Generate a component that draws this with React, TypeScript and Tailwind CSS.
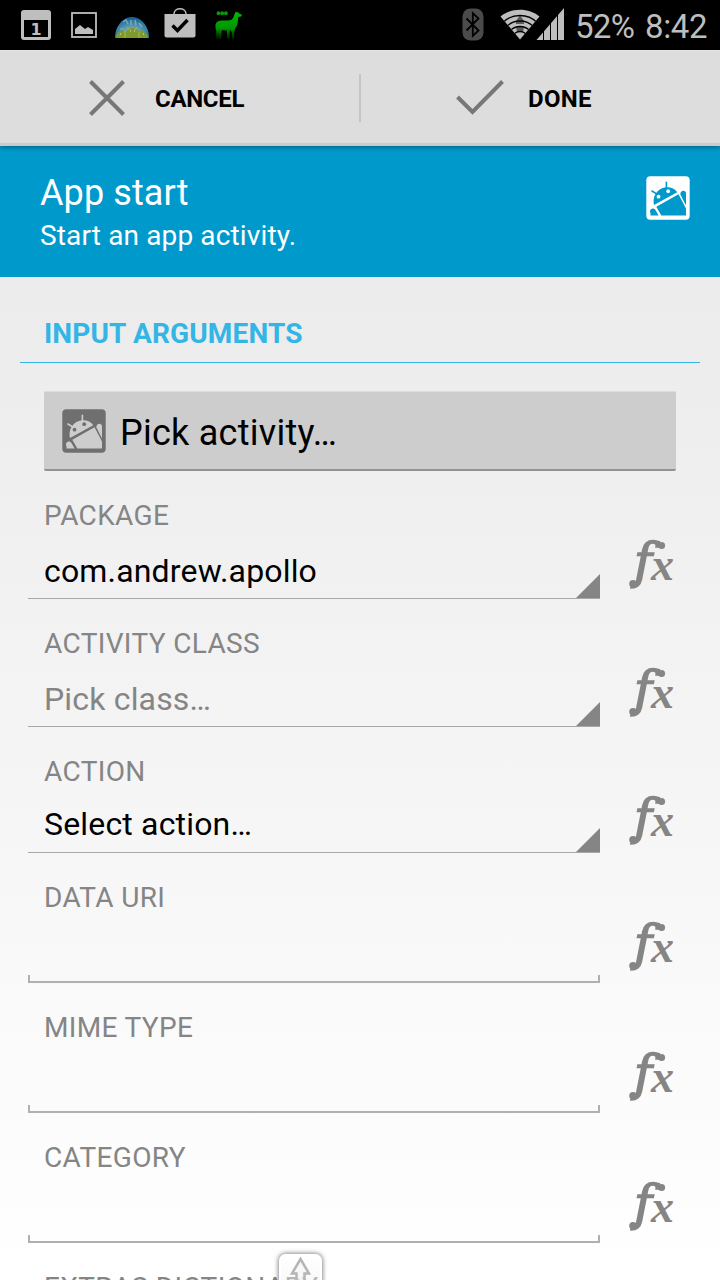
import React from 'react';

interface Field {
  label: string;
  value?: string;
  valueClass?: string;
  type: 'spinner' | 'text';
  height: string;
}

const fields: Field[] = [
  { label: 'PACKAGE', value: 'com.andrew.apollo', valueClass: 'pt-[11px] text-black', type: 'spinner', height: 'h-[128px]' },
  { label: 'ACTIVITY CLASS', value: 'Pick class…', valueClass: 'pt-[11px] text-[#858585]', type: 'spinner', height: 'h-[128px]' },
  { label: 'ACTION', value: 'Select action…', valueClass: 'pt-[7px] text-black', type: 'spinner', height: 'h-[126px]' },
  { label: 'DATA URI', type: 'text', height: 'h-[130px]' },
  { label: 'MIME TYPE', type: 'text', height: 'h-[130px]' },
  { label: 'CATEGORY', type: 'text', height: 'h-[130px]' },
];

const AndroidIcon = ({ box, ink }: { box: string; ink: string }) => (
  <svg width="44" height="44" viewBox="0 0 44 44" className="shrink-0">
    <rect x="0.3" y="0.3" width="43.4" height="43.4" rx="4" fill={box} />
    <g stroke={ink} strokeWidth="1.6" strokeLinecap="round">
      <path d="M20.4 6.4V12" />
      <path d="M6 15l5 3.2" />
    </g>
    <path d="M8 29C6.300 22.500 9.500 15.500 15.500 12.600 21.500 10 28 11.500 31.200 16.300Z" fill={ink} />
    <circle cx="12.500" cy="20.700" r="1.900" fill={box} />
    <circle cx="22.200" cy="15.200" r="1.900" fill={box} />
    <path d="M10.300 30.800L32.500 18.200 40 32.500V39.500H15.300Z" fill={ink} />
    <path d="M34.400 18.500C34.200 16 36 14.600 38 14.900 39.400 15.200 40 16 40 17V29.500Z" fill={ink} />
    <path d="M4.500 39.500V37.200C3 34.500 5 32.200 7.300 32.400 8.300 32.500 8.900 33 9.300 33.800L12.600 39.500Z" fill={ink} />
  </svg>
);

const StatusBar = () => (
  <div className="flex h-[50px] shrink-0 items-center bg-black pl-[21px] pr-3 text-[#bebebe]">
    <svg width="30" height="50" viewBox="0 0 30 50">
      <rect x="0" y="10" width="30" height="30" rx="3" fill="#bebebe" />
      <rect x="3" y="20" width="24" height="17" fill="#000" />
      <text x="15" y="35" textAnchor="middle" fontSize="16" fontWeight="700" fill="#bebebe" fontFamily="DejaVu Sans, sans-serif">1</text>
    </svg>
    <svg width="26" height="50" viewBox="0 0 26 50" className="ml-5">
      <rect x="1" y="13" width="24" height="24" fill="none" stroke="#bebebe" strokeWidth="1.800" />
      <path d="M4 34V29l5-4 5 4 3-2 5 3v4z" fill="#bebebe" />
    </svg>
    <svg width="34" height="50" viewBox="0 0 34 50" className="ml-[18px]">
      <defs>
        <radialGradient id="globe" cx="0.5" cy="0.7" r="0.65">
          <stop offset="0" stopColor="#9db9bb" />
          <stop offset="0.6" stopColor="#4388a9" />
          <stop offset="1" stopColor="#16618f" />
        </radialGradient>
      </defs>
      <path d="M0 38C0 27 7 17 17 17s17 10 17 21z" fill="url(#globe)" />
      <path d="M8 22l3-2 2 4M16 20v5M20 20l1 5M24 23l3 4M5 29h4" stroke="#79a8bd" strokeWidth="1.500" fill="none" />
      <path d="M1 38c0-4 2-6 4-6l2-2 4 2c2-3 4-4 7-4s5 2 6 4l4-2 2 3c2 1 3 3 3 5z" fill="#7c9a2e" />
      <path d="M10 38v-8M24 38v-6M12 27l2 3M22 27l-2 3" stroke="#a0b63f" strokeWidth="1.200" />
      <path d="M15 31h1M19 31h1M5 34h1M28 34h1" stroke="#e4e9c0" strokeWidth="1.200" />
    </svg>
    <svg width="32" height="50" viewBox="0 0 32 50" className="ml-[15px]">
      <path d="M10 15v-1c0-7 12-7 12 0v1" stroke="#bebebe" strokeWidth="1.500" fill="none" />
      <path d="M0.500 14H31.500V35.500a2 2 0 0 1-2 2H2.500a2 2 0 0 1-2-2z" fill="#bebebe" />
      <path d="M8.500 25.500l5 5L23.500 20" stroke="#000" strokeWidth="3.400" fill="none" />
    </svg>
    <svg width="28" height="50" viewBox="0 0 28 50" className="ml-[19px]">
      <defs>
        <linearGradient id="llama" gradientUnits="userSpaceOnUse" x1="0" y1="12" x2="0" y2="39">
          <stop offset="0" stopColor="#00b800" />
          <stop offset="0.6" stopColor="#009600" />
          <stop offset="1" stopColor="#001800" />
        </linearGradient>
      </defs>
      <path
        d="M0.500 25C1 21.500 4 20.500 8 20.500h4c4 0 5.500-1 6.500-3.500L20 13l1-1.500 1 1 1-.8.7 1.500 3.300 1.500-.7 1.800-3 .5-.5 4C22.500 24 22 27 19.800 29l-.6 4 .3 6h-2.500l-.3-7-1.700-2-.5 9h-2.500l-.2-8.500c-1.800.3-3.300 0-4.800-.5L6.500 33l-.2 6H4L3.700 33 3 39H1.500L1.200 31C.5 29 .3 27 .5 25z"
        fill="url(#llama)"
      />
      <g fill="#00a000">
        <circle cx="3.500" cy="13.200" r="1.900" />
        <circle cx="7.200" cy="13.200" r="1.900" />
        <circle cx="10.900" cy="13.200" r="1.900" />
      </g>
    </svg>
    <div className="grow" />
    <svg width="22" height="50" viewBox="0 0 22 50">
      <rect x="0.500" y="8.500" width="21" height="32" rx="8" fill="#4b4b4b" />
      <path d="M4.500 18.500L16.500 30.500 10.800 36V13L16.500 18.500 4.500 30.500" stroke="#000" strokeWidth="1.800" fill="none" />
    </svg>
    <svg width="66" height="50" viewBox="0 0 66 50" className="ml-[16px]">
      <defs>
        <clipPath id="fan">
          <path d="M0.500 16.500C11 7.500 29 7.500 39.500 16.500L20 39.500Z" />
        </clipPath>
      </defs>
      <g clipPath="url(#fan)">
        <rect width="40" height="40" fill="#bebebe" />
        <path d="M20 15l4 6v3h-8v-3zM16 27h8l-1 5h-6z" fill="#5b5b5b" />
        <g fill="none" stroke="#000" strokeWidth="1.300">
          <circle cx="20" cy="40" r="24.500" />
          <circle cx="20" cy="40" r="19" />
          <circle cx="20" cy="40" r="13.500" />
          <circle cx="20" cy="40" r="8.500" />
        </g>
      </g>
      <path d="M36.500 40L64 8V40Z" fill="#bebebe" />
      <path d="M43.500 26v14M50.500 20v20M57.500 12v28" stroke="#000" strokeWidth="1" />
    </svg>
    <span className="ml-[9px] w-[61px] whitespace-nowrap pt-[3px] text-[33px] tracking-[-0.7px]">52%</span>
    <span className="ml-[9px] w-[63px] whitespace-nowrap pt-[3px] text-[33px] tracking-[-0.4px]">8:42</span>
  </div>
);

const ActionBar = () => (
  <div className="relative z-10 flex h-24 shrink-0 items-center border-b-[3px] border-t border-b-[#cbcbcb] border-t-[#e6e6e6] bg-[#ddd] pt-[2px] text-2xl font-bold text-black shadow-[0_1px_5px_rgba(0,0,0,0.4)]">
    <div className="flex h-12 w-[361px] items-center border-r-2 border-[#c5c5c5] pl-[87px]">
      <svg width="40" height="40" viewBox="0 0 40 40" className="mr-7">
        <path d="M3.500 3.500l33 33M36.500 3.500l-33 33" stroke="#777" strokeWidth="4" />
      </svg>
      <span className="pt-px tracking-[-0.3px]">CANCEL</span>
    </div>
    <div className="flex items-center pl-[94px]">
      <svg width="50" height="40" viewBox="0 0 50 40" className="mr-[23px]">
        <path d="M2.500 19L17.500 34 47.500 3.500" stroke="#777" strokeWidth="4" fill="none" />
      </svg>
      <span className="pt-px tracking-[0.3px]">DONE</span>
    </div>
  </div>
);

const FxButton = () => (
  <svg width="48" height="60" viewBox="0 0 48 60" className="mt-[64px] shrink-0 overflow-visible" fill="#858585">
    <text y="43" fontStyle="italic">
      <tspan x="6" fontFamily="DejaVu Serif, serif" fontSize="49" stroke="#858585" strokeWidth="1.6">f</tspan>
      <tspan x="23" dy="2" fontFamily="Liberation Serif, serif" fontWeight="700" fontSize="46">x</tspan>
    </text>
    <circle cx="33.600" cy="10.500" r="3.500" />
    <circle cx="5" cy="48.800" r="3.800" />
  </svg>
);

const FieldRow = ({ field }: { field: Field }) => (
  <div className={`flex shrink-0 pl-7 pr-[44px] ${field.height}`}>
    <div className="flex w-[572px] flex-col">
      <div className="mt-[29px] h-8 pl-4 text-[28px] leading-8 tracking-[0.35px] text-[#858585]">{field.label}</div>
      {field.type === 'spinner' ? (
        <div className="relative flex grow items-center border-b border-[#a8a8a8] pl-4 text-[32px] tracking-[0.17px]">
          <span className={field.valueClass}>{field.value}</span>
          <svg width="24" height="24" viewBox="0 0 24 24" className="absolute bottom-0 right-0">
            <path d="M24 0V24H0Z" fill="#858585" />
          </svg>
        </div>
      ) : (
        <div className="flex grow flex-col justify-end">
          <div className="h-2 border-x-2 border-b-2 border-[#b0b0b0]" />
        </div>
      )}
    </div>
    <div className="ml-[28px]">
      <FxButton />
    </div>
  </div>
);

const App: React.FC = () => {
  return (
    <div className="relative flex h-[1280px] w-[720px] flex-col overflow-hidden bg-gradient-to-b from-[#e6e6e6] to-white font-['Roboto',sans-serif]">
      <StatusBar />
      <ActionBar />
      <div className="flex h-[131px] shrink-0 justify-between bg-[#0099cc] pl-10 pr-[30px] text-white">
        <div className="pt-[26px]">
          <h1 className="text-[36px] leading-[42px] tracking-[0.1px]">App start</h1>
          <p className="pt-px text-[28px] leading-[42px] tracking-[0.14px]">Start an app activity.</p>
        </div>
        <div className="pt-[30px]">
          <AndroidIcon box="#ffffff" ink="#0099cc" />
        </div>
      </div>
      <div className="mx-5 h-[86px] shrink-0 border-b border-[#33b5e5] pl-6 pt-[41px] text-[28px] font-bold leading-8 tracking-[0.15px] text-[#33b5e5]">
        INPUT ARGUMENTS
      </div>
      <div className="mx-11 mt-7 flex h-20 shrink-0 items-center rounded-[2px] border-b-2 border-t border-b-[#929292] border-t-[#dcdcdc] bg-[#cdcdcd] pl-[18px] text-[36px] text-black">
        <AndroidIcon box="#6f6f6f" ink="#cdcdcd" />
        <span className="ml-[14px] pt-1 tracking-[0.25px]">Pick activity…</span>
      </div>
      {fields.map((field) => (
        <FieldRow key={field.label} field={field} />
      ))}
      <div className="mt-[29px] h-8 shrink-0 pl-11 text-[28px] leading-8 tracking-[0.35px] text-[#858585]">EXTRAS DICTIONARY</div>
      <div className="absolute left-[279px] top-[1254px] h-[46px] w-[43px] rounded-[7px] border-2 border-white bg-gradient-to-b from-white/60 to-[#ddd]/30 shadow-[0_0_4px_1px_rgba(0,0,0,0.45)]">
        <svg width="39" height="40" viewBox="0 0 39 40">
          <path d="M19.500 3L28 17.500H23.500V36H15.500V17.500H11Z" fill="#f4f4f4" fillOpacity="0.500" stroke="#b5b5b5" strokeWidth="2.500" />
        </svg>
      </div>
    </div>
  );
};

export default App;
